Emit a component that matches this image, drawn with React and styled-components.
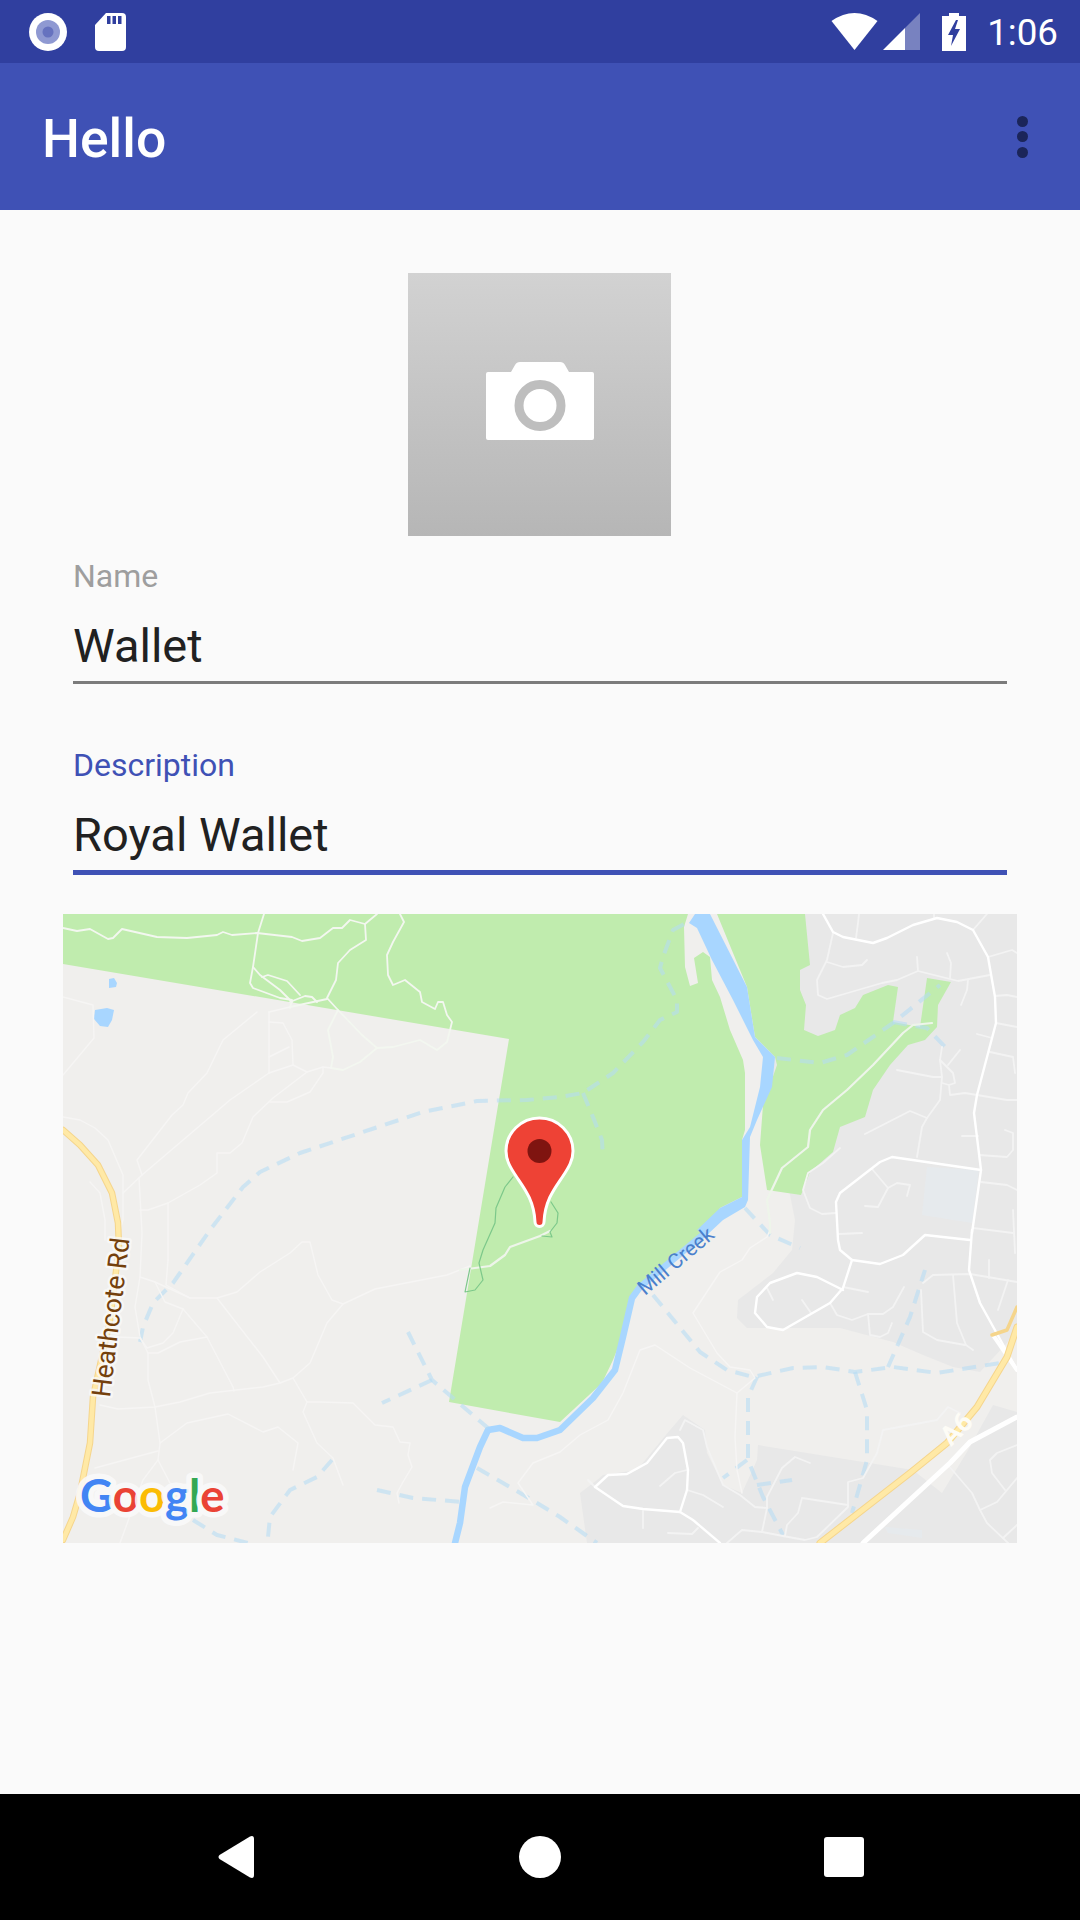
import React from "react";
import styled, { createGlobalStyle } from "styled-components";

const GlobalStyle = createGlobalStyle`
  html, body { margin: 0; padding: 0; background: #fafafa; }
  body { font-family: Roboto, "Liberation Sans", sans-serif; overflow: hidden; }
`;

const Screen = styled.div`
  width: 1080px;
  height: 1920px;
  display: flex;
  flex-direction: column;
  background: #fafafa;
`;

const StatusBar = styled.div`
  height: 63px;
  flex: none;
  display: flex;
  align-items: center;
  justify-content: space-between;
  padding: 0 22px 0 29px;
  background: #303f9f;
  color: #fff;
`;

const StatusGroup = styled.div`
  display: flex;
  align-items: center;
  gap: ${(p) => p.$gap || 0}px;
`;

const StatusIcon = styled.svg`
  display: block;
  flex: none;
  margin-left: ${(p) => p.$left || 0}px;
`;

const Clock = styled.span`
  font-size: 36.75px;
  line-height: 40px;
  margin-left: 21px;
  padding-top: 2px;
`;

const AppBar = styled.header`
  height: 147px;
  flex: none;
  display: flex;
  align-items: center;
  justify-content: space-between;
  padding: 0 52px 0 42px;
  background: #3f51b5;
`;

const Title = styled.h1`
  margin: 0;
  padding-top: 5px;
  color: #fff;
  font-size: 53.5px;
  line-height: 60px;
  font-weight: 500;
`;

const Overflow = styled.div`
  display: flex;
  flex-direction: column;
  gap: 4.5px;
`;

const OverflowDot = styled.span`
  width: 11px;
  height: 11px;
  border-radius: 50%;
  background: #1b2559;
`;

const Content = styled.main`
  flex: 1;
  display: flex;
  flex-direction: column;
  padding-top: 63px;
`;

const PhotoSlot = styled.div`
  width: 263px;
  height: 263px;
  box-sizing: border-box;
  margin: 0 0 22px 408px;
  padding-bottom: 7px;
  display: flex;
  align-items: center;
  justify-content: center;
  background: linear-gradient(#d2d2d2, #b6b6b6);
`;

const Field = styled.div`
  margin: ${(p) => (p.$active ? "63px" : "0")} 73px 0;
`;

const FieldLabel = styled.div`
  font-size: 32px;
  line-height: 36px;
  margin-bottom: 24px;
  color: ${(p) => (p.$active ? "#3f51b5" : "#9e9e9e")};
`;

const FieldValue = styled.div`
  font-size: 47px;
  line-height: 56px;
  padding-bottom: 7px;
  color: #212121;
  border-bottom: ${(p) => (p.$active ? "5px solid #3f51b5" : "3px solid #7b7b7b")};
`;

const MapFrame = styled.svg`
  display: block;
  width: 954px;
  height: 629px;
  margin: 39px 63px 0;
  background: #f0efed;
`;

const Area = styled.polygon`
  fill: ${(p) => p.$fill};
`;

const Line = styled.polyline`
  fill: none;
  stroke: ${(p) => p.$color};
  stroke-width: ${(p) => p.$width};
  stroke-linejoin: round;
  stroke-linecap: round;
`;

const Footpath = styled.polyline`
  fill: none;
  stroke: #b4dcf5;
  stroke-opacity: 0.56;
  stroke-width: 4px;
  stroke-dasharray: 14 9;
  stroke-linejoin: round;
`;

const MapLabel = styled.text`
  font-family: ${(p) => p.$font || "Roboto"}, sans-serif;
  font-size: ${(p) => p.$size}px;
  font-weight: ${(p) => p.$weight || 400};
  fill: ${(p) => p.$color};
  stroke: ${(p) => p.$halo || "none"};
  stroke-width: ${(p) => p.$haloWidth || 0}px;
  stroke-linejoin: round;
  paint-order: stroke;
`;

const NavBar = styled.nav`
  height: 126px;
  flex: none;
  display: flex;
  align-items: center;
  justify-content: center;
  gap: 184px;
  background: #000;
`;

const NavButton = styled.div`
  width: 120px;
  display: flex;
  justify-content: center;
`;

const parkWest =
  "63,914 688,914 684,927 685,967 690,986 698,983 694,958 703,952 710,957 712,980 720,997 730,1030 743,1060 745,1073 745,1130 742,1140 742,1197 720,1208 707,1233 640,1285 632,1300 623,1335 613,1360 602,1383 560,1422 449,1402 509,1039 63,964";
const parkEast =
  "717,914 805,914 810,965 800,970 800,990 806,1005 804,1030 818,1036 835,1030 840,1015 855,1008 863,995 888,985 898,987 893,1022 920,1027 927,978 951,982 938,1005 937,1027 925,1040 908,1045 890,1065 873,1090 865,1117 840,1127 833,1152 810,1172 801,1195 767,1190 760,1145 763,1105 777,1065 775,1057 755,1037 747,987";
const suburbNorth =
  "770,914 1017,914 1017,1327 1007,1343 980,1372 953,1367 923,1355 893,1342 840,1328 747,1328 737,1318 738,1300 773,1273 792,1250 795,1220 790,1195 770,1100";
const suburbSouth =
  "587,1543 580,1493 597,1480 603,1475 637,1470 670,1430 683,1415 705,1430 707,1453 723,1485 742,1493 757,1460 758,1445 913,1470 942,1493 967,1452 993,1405 1017,1412 1017,1543";
const riverUpper =
  "695,914 710,914 747,987 755,1037 775,1057 772,1087 757,1120 750,1137 748,1200 745,1207 723,1220 707,1235 697,1230 720,1208 742,1197 742,1140 750,1127 760,1087 763,1057 753,1040 733,1000 712,960 697,928 689,923";
const riverLower =
  "705,1233 640,1287 632,1298 623,1337 615,1370 593,1398 560,1430 537,1438 523,1438 500,1428 488,1430 480,1447 465,1487 460,1523 455,1543";

const northTrails = [
  "63,928 77,931 90,929 108,939 113,938 122,929 157,937 187,938 217,935 223,932 232,935 257,933 292,937 302,941 320,938 333,928 342,928 350,920 365,924 377,914",
  "365,924 366,940 350,950 338,963 336,980 327,998 338,1010",
  "264,914 258,933 253,967 250,983 253,988 280,998 292,1000 290,1008",
  "253,967 260,975 280,990 292,1002",
  "262,977 268,975 287,981 300,995",
  "290,1002 305,996 312,997 317,1002",
  "290,1007 327,999",
  "400,914 404,922 393,942 387,955 388,975 393,985 405,980 420,992 422,1002 435,1009 438,1002 443,1002 447,1015 452,1022 447,1042 437,1050 420,1040 393,1047 377,1048 362,1035 338,1010 328,1030 333,1057 331,1068 343,1070 360,1062 377,1048",
];

const landTrails = [
  "269,1012 290,1007",
  "269,1012 269,1073",
  "269,1022 283,1023 292,1040 293,1065",
  "269,1057 289,1047",
  "269,1073 293,1065 307,1072 323,1067 331,1068",
  "323,1067 323,1073 310,1092 287,1102 270,1102",
  "307,1072 273,1098 253,1117 242,1143 230,1153 217,1153 217,1173 200,1185 168,1203 148,1210 140,1210",
  "168,1203 168,1260",
  "269,1073 230,1100 142,1175 123,1193",
  "257,1012 223,1040 207,1073 188,1093 183,1105 172,1115 137,1160 142,1175",
  "139,1178 142,1233 140,1277",
  "63,997 93,1005 94,1038 63,1075",
  "63,1117 80,1120 95,1128 108,1140 123,1175 123,1220 118,1237",
  "90,1182 100,1193 105,1220 105,1240",
  "168,1260 166,1285 190,1298",
  "140,1277 155,1282 190,1298 217,1298 237,1292 260,1272 290,1253 302,1242 310,1242 318,1275 332,1300 343,1304 375,1289 447,1275 470,1266",
  "140,1277 135,1307 140,1337 148,1353 148,1380 155,1407",
  "155,1282 165,1302 183,1309 207,1337 233,1387 234,1391",
  "217,1298 263,1357 280,1383",
  "343,1304 327,1323 310,1363 293,1378 280,1383 263,1387 210,1393 180,1402 155,1407 118,1409 100,1405",
  "293,1378 307,1402 320,1402 353,1403 375,1425 393,1427 400,1442 410,1443 408,1455 412,1467 403,1482 397,1493 399,1503",
  "307,1402 303,1412 317,1443 333,1458 343,1485",
  "155,1407 160,1443 187,1423 228,1414 263,1432 278,1427 298,1443 293,1470",
  "160,1443 158,1460 143,1480 120,1543",
  "95,1468 143,1455 158,1451",
  "158,1460 170,1483",
  "117,1337 140,1338 147,1348 163,1343 173,1333 183,1309",
  "148,1353 158,1353 180,1342 207,1337",
  "490,1508 503,1502 533,1505 518,1483 533,1463 560,1452 580,1435 608,1420 623,1393 640,1350 655,1345 690,1368 737,1393",
  "770,1230 767,1237 750,1248 742,1260 720,1272 693,1313 717,1353 730,1367 750,1370 755,1378 737,1393 735,1437 737,1470 742,1493",
];

const parkTrails = [
  "460,1270 490,1266 505,1255 510,1247 540,1236 550,1231",
  "932,1023 913,1025 903,1033 873,1065 847,1090 823,1110 810,1130 808,1147 782,1168 767,1200 770,1223 770,1233",
];

const mainRoads = [
  "972,1233 981,1170 974,1113 977,1095 996,1023 995,997 988,957 973,930 957,922 937,918 913,925 887,938 873,943 843,937 833,932 823,914",
  "972,1230 969,1270 980,1303 1017,1370",
  "981,1170 892,1157 880,1162 840,1193 836,1202 838,1240 840,1250 852,1260 880,1264 903,1255 925,1235 970,1240",
  "852,1260 843,1288 830,1303 783,1330 767,1327 755,1313 757,1297 770,1283 797,1273 817,1277 843,1290",
  "595,1487 623,1506 643,1509 680,1512 693,1520 720,1543",
  "595,1487 608,1475 627,1474 647,1463 667,1438 678,1437 683,1443 688,1470 687,1490 680,1512",
];

const sideRoads = [
  "917,1157 922,1127 927,1118 910,1111 865,1134",
  "927,1118 940,1100 942,1077 940,1060 942,1047",
  "977,1095 1007,1100 1017,1100",
  "977,1095 965,1093 950,1095 949,1085 942,1083",
  "940,1060 953,1073 955,1083 949,1085",
  "948,1065 960,1050",
  "897,1070 933,1077 942,1077",
  "990,1052 1013,1057 1015,1073",
  "996,1023 1017,1027",
  "977,1034 992,1038",
  "995,996 1007,995 1017,997",
  "988,957 1012,950 1017,953",
  "973,930 987,914",
  "833,933 827,960 817,980 818,995 827,999 882,983 897,980 918,971 958,981 990,975",
  "827,962 843,967 862,965 867,960",
  "918,971 917,957",
  "950,978 951,963 947,953",
  "968,980 967,990 961,1005",
  "859,914 858,923 856,938",
  "934,914 934,918",
  "840,1148 823,1163 808,1173 803,1190 810,1208 822,1214 836,1213",
  "872,1169 888,1188 897,1183 910,1185 907,1196",
  "888,1188 878,1207 865,1206",
  "839,1234 862,1233",
  "981,1182 1007,1185 1017,1190",
  "973,1228 1013,1233",
  "1013,1210 1015,1253",
  "962,1136 978,1136",
  "979,1155 1007,1157 1013,1150 1013,1133 1005,1130",
  "843,1287 868,1292",
  "830,1303 837,1315 852,1320 868,1314 883,1314 893,1307 904,1287",
  "868,1314 870,1335 880,1337 888,1333 892,1323",
  "767,1288 773,1300",
  "802,1300 811,1313",
  "953,1275 957,1323 966,1345 973,1350",
  "923,1283 933,1275 970,1274 1017,1282",
  "921,1290 923,1332 937,1340 965,1345",
  "989,1260 989,1278",
  "1008,1280 998,1310",
  "588,1480 595,1487",
  "660,1486 675,1473 687,1470",
  "687,1490 703,1495 723,1507",
  "643,1511 643,1528",
  "668,1533 692,1534 698,1528",
  "680,1430 685,1420 703,1430 707,1447 723,1485 740,1495 755,1507 767,1508 762,1532 783,1536 805,1540 817,1537 848,1507 848,1482 863,1478 877,1453 883,1430 937,1420 948,1407 960,1413",
  "767,1508 767,1497 782,1468 795,1457 810,1463",
  "785,1536 787,1525 798,1513 802,1498 848,1505",
  "762,1532 742,1530 727,1543",
  "948,1465 972,1493 980,1510 987,1523 1008,1543",
  "980,1510 997,1502 1017,1478",
  "1005,1490 992,1473 990,1460 997,1453 1017,1445",
  "1003,1538 1017,1525",
];

const footpaths = [
  "140,1342 143,1327 153,1303 173,1283 210,1230 243,1187 260,1172 300,1153 360,1133 423,1112 477,1101 527,1100 560,1097 583,1093 613,1073 643,1042 660,1020 677,1012 677,1000 660,968 663,957 673,930 690,921",
  "583,1093 593,1117 602,1140 603,1158",
  "777,1058 820,1063 847,1055 893,1023 940,985",
  "893,1022 927,1028 948,1050",
  "745,1208 770,1235 800,1248",
  "408,1332 432,1380 488,1428",
  "432,1380 382,1403",
  "653,1295 700,1352 727,1370 753,1377 793,1368 823,1367 855,1372 893,1367 937,1373 1000,1363",
  "757,1377 748,1397 748,1460 763,1497 783,1535",
  "747,1460 723,1478",
  "757,1485 792,1480",
  "855,1372 867,1410 867,1460 852,1513",
  "888,1367 910,1317 925,1270",
  "477,1468 527,1497 560,1517 597,1543",
  "377,1490 413,1498 462,1502",
  "332,1460 317,1477 290,1490 270,1517 268,1537 272,1543",
  "193,1520 217,1535 248,1543",
];

const heathcote =
  "63,1130 80,1145 98,1165 112,1193 118,1223 119,1247 110,1320 93,1397 90,1443 80,1493 73,1517 63,1540";
const motorway = "820,1543 910,1473 947,1443 977,1407 1007,1357 1017,1327";

const CameraIcon = () => (
  <svg width="108" height="78" viewBox="0 0 108 78">
    <path
      d="M2 10H25L29 3Q30.500 0 34 0H74Q77.500 0 79 3L83 10H106Q108 10 108 12V76Q108 78 106 78H2Q0 78 0 76V12Q0 10 2 10Z"
      fill="#fff"
    />
    <circle cx="54" cy="43.500" r="21" fill="none" stroke="#bebebe" strokeWidth="9" />
  </svg>
);

const WorldMap = () => (
  <MapFrame viewBox="63 914 954 629">
    <Area points={suburbNorth} $fill="#e8e8e8" />
    <Area points={suburbSouth} $fill="#e8e8e8" />
    <Area points={parkWest} $fill="#c0ecae" />
    <Area points={parkEast} $fill="#c0ecae" />
    <Area points="927,1167 979,1170 972,1223 922,1215" $fill="#e6eaed" />
    <Area points="885,1527 922,1530 922,1538 888,1533" $fill="#e6eaed" />
    <Area points={riverUpper} $fill="#a8d6ff" />
    <Line points={riverLower} $color="#a8d6ff" $width={6.5} />
    <Area points="109,979 114,978 117,983 116,987 109,988" $fill="#a8d6ff" />
    <Area points="95,1010 107,1008 114,1010 112,1020 108,1027 100,1026 94,1019" $fill="#a8d6ff" />

    {footpaths.map((points) => (
      <Footpath key={points} points={points} />
    ))}
    {northTrails.map((points) => (
      <Line key={points} points={points} $color="#f3f7f0" $width={1.8} />
    ))}
    {landTrails.map((points) => (
      <Line key={points} points={points} $color="#f6f5f4" $width={1.4} />
    ))}
    {sideRoads.map((points) => (
      <Line key={points} points={points} $color="#f3f3f3" $width={1.8} />
    ))}
    {mainRoads.map((points) => (
      <Line key={points} points={points} $color="#fff" $width={2.4} />
    ))}
    {parkTrails.map((points) => (
      <Line key={points} points={points} $color="#eef5ea" $width={2.2} />
    ))}
    <Line
      points="513,1177 505,1187 496,1208 495,1223 483,1250 479,1263 483,1280 475,1290 465,1292 470,1268"
      $color="#7cc88a"
      $width={1.2}
    />
    <Line
      points="551,1202 558,1213 557,1223 550,1232 552,1237 542,1236"
      $color="#7cc88a"
      $width={1.2}
    />

    <Line points="863,1543 950,1463 970,1442 1017,1417" $color="#fff" $width={5} />
    <Line points="1017,1370 993,1335" $color="#fff" $width={4} />
    <Line points={heathcote} $color="#f5d58c" $width={6.5} />
    <Line points={heathcote} $color="#ffe9a6" $width={4.5} />
    <Line points={motorway} $color="#f5d58c" $width={7} />
    <Line points={motorway} $color="#ffe9a6" $width={5} />
    <Line points="1017,1307 1007,1330 992,1335" $color="#f5d58c" $width={3.5} />

    <MapLabel
      transform="translate(110 1398) rotate(-83)"
      $size={26.5}
      $color="#74400c"
      $halo="rgba(250, 250, 250, 0.75)"
      $haloWidth={5}
    >
      Heathcote Rd
    </MapLabel>
    <MapLabel transform="translate(645 1296) rotate(-40)" $size={21} $color="#4a80cc">
      Mill Creek
    </MapLabel>
    <MapLabel
      transform="translate(951 1447) rotate(-45)"
      $size={27}
      $weight={700}
      $color="#fdfcf6"
    >
      A6
    </MapLabel>
    <MapLabel
      x="80"
      y="1512"
      $font="Lato"
      $size={45.5}
      $weight={700}
      $color="#4285f4"
      $halo="rgba(250, 250, 250, 0.9)"
      $haloWidth={11}
    >
      G<tspan fill="#ea4335">o</tspan>
      <tspan fill="#fbbc05">o</tspan>
      <tspan fill="#4285f4">g</tspan>
      <tspan fill="#34a853">l</tspan>
      <tspan fill="#ea4335">e</tspan>
    </MapLabel>

    <path
      d="M539.500 1118C521 1118 506 1133 506 1151C506 1160 510 1167 516 1176C524 1188 534 1200 535 1222A4.500 4.500 0 0 0 544 1222C545 1200 555 1188 563 1176C569 1167 573 1160 573 1151C573 1133 558 1118 539.500 1118Z"
      fill="#ee4235"
      stroke="#fff"
      strokeWidth="3"
    />
    <circle cx="539.500" cy="1151" r="12" fill="#7f1410" />
  </MapFrame>
);

export default function App() {
  return (
    <Screen>
      <GlobalStyle />
      <StatusBar>
        <StatusGroup $gap={28}>
          <StatusIcon width="38" height="38" viewBox="0 0 38 38">
            <circle cx="19" cy="19" r="19" fill="#fff" />
            <circle cx="19" cy="19" r="12" fill="#8f99d2" />
            <circle cx="19" cy="19" r="5.500" fill="#6672bf" />
          </StatusIcon>
          <StatusIcon width="31" height="38" viewBox="0 0 31 38">
            <path
              d="M11 0H27Q31 0 31 4V34Q31 38 27 38H4Q0 38 0 34V12Z"
              fill="#fff"
            />
            <path d="M12 3h3.500v8H12zM17.500 3H21v8h-3.500zM23 3h3.500v8H23z" fill="#303f9f" />
          </StatusIcon>
        </StatusGroup>
        <StatusGroup>
          <StatusIcon width="47" height="37" viewBox="0 0 47 37">
            <path d="M23.500 37L0.500 8Q23.500 -8 46.500 8Z" fill="#fff" />
          </StatusIcon>
          <StatusIcon width="37" height="37" viewBox="0 0 37 37" $left={5}>
            <path d="M0 37L22 15V37Z" fill="#fff" />
            <path d="M22 15L37 0V37H22Z" fill="#fff" fillOpacity="0.35" />
          </StatusIcon>
          <StatusIcon width="24" height="38" viewBox="0 0 24 38" $left={22}>
            <path d="M7 0H17V3H24V38H0V3H7Z" fill="#fff" />
            <path d="M14 7L6 22H11L9 33L18 16H13L16 7Z" fill="#303f9f" />
          </StatusIcon>
          <Clock>1:06</Clock>
        </StatusGroup>
      </StatusBar>
      <AppBar>
        <Title>Hello</Title>
        <Overflow>
          <OverflowDot />
          <OverflowDot />
          <OverflowDot />
        </Overflow>
      </AppBar>
      <Content>
        <PhotoSlot>
          <CameraIcon />
        </PhotoSlot>
        <Field>
          <FieldLabel>Name</FieldLabel>
          <FieldValue>Wallet</FieldValue>
        </Field>
        <Field $active>
          <FieldLabel $active>Description</FieldLabel>
          <FieldValue $active>Royal Wallet</FieldValue>
        </Field>
        <WorldMap />
      </Content>
      <NavBar>
        <NavButton>
          <svg width="36" height="42" viewBox="0 0 36 42">
            <path
              d="M1.500 19L32 0.500Q36 -1 36 3V39Q36 43 32 41.500L1.500 23Q-0.500 21 1.500 19Z"
              fill="#fff"
            />
          </svg>
        </NavButton>
        <NavButton>
          <svg width="42" height="42" viewBox="0 0 42 42">
            <circle cx="21" cy="21" r="21" fill="#fff" />
          </svg>
        </NavButton>
        <NavButton>
          <svg width="40" height="40" viewBox="0 0 40 40">
            <rect width="40" height="40" rx="3" fill="#fff" />
          </svg>
        </NavButton>
      </NavBar>
    </Screen>
  );
}
